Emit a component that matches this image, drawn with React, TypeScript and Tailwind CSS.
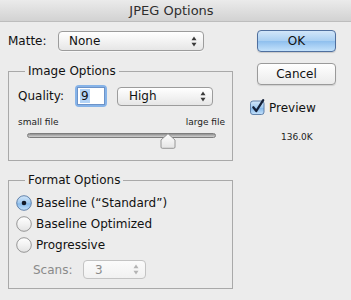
import React from "react";

function Arrows({ disabled }: { disabled?: boolean }) {
  const c = disabled ? "#b4b4b4" : "#3a3a3a";
  return (
    <svg width="6" height="11" viewBox="0 0 6 11">
      <path d="M0.5 4.2 L3 0.6 L5.5 4.2 Z" fill={c} />
      <path d="M0.5 6.8 L3 10.4 L5.5 6.8 Z" fill={c} />
    </svg>
  );
}

function RadioOn() {
  return (
    <svg width="16" height="16" viewBox="0 0 16 16">
      <defs>
        <linearGradient id="rb" x1="0" y1="0" x2="0" y2="1">
          <stop offset="0" stopColor="#d3e7fa" />
          <stop offset="0.5" stopColor="#9fc8ef" />
          <stop offset="0.55" stopColor="#86b9ea" />
          <stop offset="1" stopColor="#c6e2fb" />
        </linearGradient>
      </defs>
      <circle cx="8" cy="8" r="7.3" fill="url(#rb)" stroke="#5577a3" strokeWidth="0.9" />
      <circle cx="8" cy="8" r="2.3" fill="#111827" />
    </svg>
  );
}

function RadioOff() {
  return (
    <svg width="16" height="16" viewBox="0 0 16 16">
      <defs>
        <linearGradient id="rw" x1="0" y1="0" x2="0" y2="1">
          <stop offset="0" stopColor="#ffffff" />
          <stop offset="0.5" stopColor="#f2f2f2" />
          <stop offset="1" stopColor="#e2e2e2" />
        </linearGradient>
      </defs>
      <circle cx="8" cy="8" r="7.3" fill="url(#rw)" stroke="#8c8c8c" strokeWidth="0.9" />
    </svg>
  );
}

function CheckOn() {
  return (
    <svg width="17" height="17" viewBox="0 0 17 17">
      <defs>
        <linearGradient id="cb" x1="0" y1="0" x2="0" y2="1">
          <stop offset="0" stopColor="#d3e7fa" />
          <stop offset="0.5" stopColor="#9fc8ef" />
          <stop offset="0.55" stopColor="#86b9ea" />
          <stop offset="1" stopColor="#c6e2fb" />
        </linearGradient>
      </defs>
      <rect x="0.5" y="3" width="13.5" height="13.5" rx="2.5" fill="url(#cb)" stroke="#5577a3" strokeWidth="0.9" />
      <path d="M3.3 9.3 L6.3 13 L13.2 2.2" fill="none" stroke="#15213a" strokeWidth="2.3" strokeLinecap="round" strokeLinejoin="round" />
    </svg>
  );
}

function Thumb() {
  return (
    <svg width="16" height="16" viewBox="0 0 16 16">
      <defs>
        <linearGradient id="th" x1="0" y1="0" x2="0" y2="1">
          <stop offset="0" stopColor="#ffffff" />
          <stop offset="1" stopColor="#e4e4e4" />
        </linearGradient>
      </defs>
      <path d="M8 0.7 L15 7 L15 14 Q15 15.3 13.7 15.3 L2.3 15.3 Q1 15.3 1 14 L1 7 Z" fill="url(#th)" stroke="#8d8d8d" strokeWidth="0.9" />
    </svg>
  );
}

export default function App() {
  return (
    <div className="w-[351px] h-[300px] overflow-hidden bg-[#ececec] font-['DejaVu_Sans','Liberation_Sans',sans-serif] text-[#111]">
      <div className="flex h-[22px] items-center justify-center border-b border-[#bdbdbd] bg-[linear-gradient(to_bottom,#ebebeb,#d2d2d2)] pr-[8px] text-[13px] leading-[16px] text-[#2e2e2e]">
        JPEG Options
      </div>
      <div className="flex">
        {/* Left column */}
        <div className="w-[240px] pl-[8px]">
          <div className="mt-[9px] flex h-[20px] items-center">
            <div className="w-[50px] text-[12px] leading-[14px]">Matte:</div>
            <div className="flex h-[20px] w-[146px] items-center justify-between rounded-[4px] border border-[#9c9c9c] bg-[linear-gradient(to_bottom,#ffffff,#f3f3f3_50%,#e6e6e6)] pl-[10px] pr-[6px] text-[12px] leading-[14px] shadow-[0_1px_0_rgba(255,255,255,0.6)]">
              <span>None</span>
              <Arrows />
            </div>
          </div>

          <fieldset className="mt-[13px] w-[225px] border border-[#a9a9a9] pb-[11px]">
            <legend className="ml-[16px] px-[3px] text-[12px] leading-[14px]">Image Options</legend>
            <div className="mt-[7px] flex h-[22px] items-center pl-[9px]">
              <div className="w-[57px] text-[12px] leading-[14px]">Quality:</div>
              <div className="h-[22px] w-[32px] rounded-[4px] bg-[#86b3e8] p-[2px]">
                <div className="flex h-[18px] w-[28px] items-center border border-[#6d93c8] bg-white pl-[2px]">
                  <span className="bg-[#b3d3f6] px-[1px] text-[12px] leading-[14px]">9</span>
                </div>
              </div>
              <div className="ml-[10px] flex h-[19px] w-[96px] items-center justify-between rounded-[4px] border border-[#9c9c9c] bg-[linear-gradient(to_bottom,#ffffff,#f3f3f3_50%,#e6e6e6)] pl-[11px] pr-[6px] text-[12px] leading-[14px]">
                <span>High</span>
                <Arrows />
              </div>
            </div>
            <div className="mt-[10px] flex justify-between pl-[9px] pr-[7px] text-[9px] leading-[11px] text-[#222]">
              <span>small file</span>
              <span>large file</span>
            </div>
            <div className="relative ml-[18px] mt-[4px] h-[16px] w-[189px]">
              <div className="mt-[5px] h-[5px] w-[189px] rounded-full border border-[#7d7d7d] bg-[linear-gradient(to_bottom,#8f8f8f,#b9b9b9_60%,#cfcfcf)]" />
              <div className="absolute left-[133px] top-0">
                <Thumb />
              </div>
            </div>
          </fieldset>

          <fieldset className="mt-[12px] w-[225px] border border-[#a9a9a9] pb-[9px]">
            <legend className="ml-[16px] px-[3px] text-[12px] leading-[14px]">Format Options</legend>
            <div className="mt-[5px] flex h-[21px] items-center pl-[7px]">
              <RadioOn />
              <span className="ml-[4px] text-[12px] leading-[14px]">Baseline (“Standard”)</span>
            </div>
            <div className="flex h-[21px] items-center pl-[7px]">
              <RadioOff />
              <span className="ml-[4px] text-[12px] leading-[14px]">Baseline Optimized</span>
            </div>
            <div className="flex h-[21px] items-center pl-[7px]">
              <RadioOff />
              <span className="ml-[4px] text-[12px] leading-[14px]">Progressive</span>
            </div>
            <div className="mt-[5px] flex h-[19px] items-center pl-[24px]">
              <div className="w-[50px] text-[12px] leading-[14px] text-[#8a8a8a]">Scans:</div>
              <div className="flex h-[19px] w-[63px] items-center justify-between rounded-[4px] border border-[#c3c3c3] bg-[linear-gradient(to_bottom,#fbfbfb,#f1f1f1)] pl-[11px] pr-[6px] text-[12px] leading-[14px] text-[#8a8a8a]">
                <span>3</span>
                <Arrows disabled />
              </div>
            </div>
          </fieldset>
        </div>

        {/* Right column */}
        <div className="flex flex-col">
          <div className="ml-[17px] mt-[8px] flex h-[22px] w-[79px] items-center justify-center rounded-[4px] border border-[#4f6f9e] bg-[linear-gradient(to_bottom,#d2e6f9,#a9cff2_50%,#90c0ee_52%,#c3e1fb)] text-[12px] leading-[14px] shadow-[0_1px_1px_rgba(0,0,0,0.15)]">
            OK
          </div>
          <div className="ml-[17px] mt-[11px] flex h-[22px] w-[79px] items-center justify-center rounded-[4px] border border-[#9a9a9a] bg-[linear-gradient(to_bottom,#ffffff,#f5f5f5_50%,#ebebeb)] text-[12px] leading-[14px] shadow-[0_1px_1px_rgba(0,0,0,0.12)]">
            Cancel
          </div>
          <div className="ml-[10px] mt-[13px] flex h-[17px] items-center">
            <CheckOn />
            <span className="ml-[2px] mt-[3px] text-[12px] leading-[14px]">Preview</span>
          </div>
          <div className="ml-[41px] mt-[17px] text-[9px] leading-[11px] text-[#222]">136.0K</div>
        </div>
      </div>
    </div>
  );
}
